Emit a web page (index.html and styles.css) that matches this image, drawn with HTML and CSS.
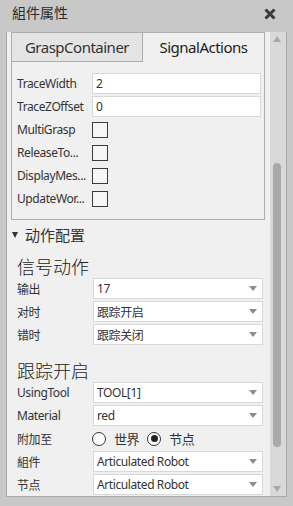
FILE: index.html
```html
<!DOCTYPE html>
<html lang="zh">

<head>
    <meta charset="UTF-8">
    <title>組件属性</title>
    <link rel="stylesheet" href="styles.css">
</head>

<body>
    <div class="titlebar">
        <span class="title">組件属性</span>
        <svg class="close" width="12" height="12" viewBox="0 0 12 12">
            <path d="M1.5 1.5 L10.5 10.5 M10.5 1.5 L1.5 10.5" stroke="#3a3a3a" stroke-width="3" />
        </svg>
    </div>

    <div class="panel">
        <div class="content">
            <!--选项卡-->
            <div class="tabs">
                <div class="tab">GraspContainer</div>
                <div class="tab current">SignalActions</div>
            </div>
            <div class="tabbody">
                <div class="row">
                    <span class="label">TraceWidth</span>
                    <div class="input">2</div>
                </div>
                <div class="row">
                    <span class="label">TraceZOffset</span>
                    <div class="input">0</div>
                </div>
                <div class="row">
                    <span class="label">MultiGrasp</span>
                    <span class="check"></span>
                </div>
                <div class="row">
                    <span class="label">ReleaseTo...</span>
                    <span class="check"></span>
                </div>
                <div class="row">
                    <span class="label">DisplayMes...</span>
                    <span class="check"></span>
                </div>
                <div class="row">
                    <span class="label">UpdateWor...</span>
                    <span class="check"></span>
                </div>
            </div>

            <!--动作配置-->
            <div class="group"><span class="caret"></span>动作配置</div>

            <div class="heading">信号动作</div>
            <div class="rows">
                <div class="row">
                    <span class="label">输出</span>
                    <div class="select"><span>17</span><i></i></div>
                </div>
                <div class="row">
                    <span class="label">对时</span>
                    <div class="select"><span>跟踪开启</span><i></i></div>
                </div>
                <div class="row">
                    <span class="label">错时</span>
                    <div class="select"><span>跟踪关闭</span><i></i></div>
                </div>
            </div>

            <div class="heading second">跟踪开启</div>
            <div class="rows">
                <div class="row">
                    <span class="label">UsingTool</span>
                    <div class="select"><span>TOOL[1]</span><i></i></div>
                </div>
                <div class="row">
                    <span class="label">Material</span>
                    <div class="select"><span>red</span><i></i></div>
                </div>
                <div class="row">
                    <span class="label">附加至</span>
                    <div class="radios">
                        <span class="radio"></span><span class="rtext">世界</span>
                        <span class="radio on"></span><span class="rtext">节点</span>
                    </div>
                </div>
                <div class="row">
                    <span class="label">組件</span>
                    <div class="select"><span>Articulated Robot</span><i></i></div>
                </div>
                <div class="row">
                    <span class="label">节点</span>
                    <div class="select"><span>Articulated Robot</span><i></i></div>
                </div>
            </div>
        </div>

        <!--滚动条-->
        <div class="scrollbar">
            <div class="arrow up"></div>
            <div class="track">
                <div class="thumb"></div>
            </div>
            <div class="arrow down"></div>
        </div>
    </div>
</body>

</html>
```

FILE: styles.css
```css
* {
    margin: 0;
    padding: 0;
    box-sizing: border-box;
}

body {
    width: 293px;
    height: 506px;
    overflow: hidden;
    background: #c8c8c8;
    font-family: "Noto Sans", "Noto Sans CJK SC", sans-serif;
    color: #333;
}

.titlebar {
    height: 32px;
    display: flex;
    align-items: center;
    justify-content: space-between;
    padding: 0 17px 0 12px;
}

.title {
    font-size: 14px;
    color: #2b2b2b;
    line-height: 20px;
    margin-top: -6px;
}

.close {
    margin-top: -5px;
}

.panel {
    margin-left: 6px;
    width: 281px;
    height: 465px;
    background: #f0f0f0;
    border: 1px solid #a8a8a8;
    border-top: none;
    display: flex;
}

.content {
    width: 258px;
    padding-left: 4px;
    overflow: hidden;
}

/* 选项卡 */
.tabs {
    display: flex;
    height: 30px;
}

.tab {
    width: 132px;
    height: 30px;
    border: 1px solid #adadad;
    background: #e4e4e4;
    font-size: 15px;
    letter-spacing: -0.5px;
    line-height: 28px;
    text-align: center;
    color: #333;
}

.tab.current {
    width: 122px;
    border-left: none;
    border-bottom: none;
    background: #f0f0f0;
    color: #222;
}

.tabbody {
    height: 158px;
    border: 1px solid #adadad;
    border-top: none;
    padding: 11px 3px 0 5px;
    display: flex;
    flex-direction: column;
    gap: 2px;
}

.row {
    height: 21px;
    display: flex;
    align-items: center;
    font-size: 12px;
    letter-spacing: -0.4px;
}

.label {
    width: 75px;
    flex-shrink: 0;
    white-space: nowrap;
}

.input {
    flex: 1;
    height: 21px;
    background: #fff;
    border: 1px solid #d8d8d8;
    padding-left: 3px;
    line-height: 19px;
}

.check {
    width: 16px;
    height: 16px;
    border: 1px solid #3c3c3c;
    background: #f6f6f6;
}

/* 分组标题 */
.group {
    height: 30px;
    line-height: 30px;
    font-size: 15px;
    padding-left: 1px;
    color: #333;
    display: flex;
    align-items: center;
}

.caret {
    width: 0;
    height: 0;
    border-left: 3px solid transparent;
    border-right: 3px solid transparent;
    border-top: 6px solid #333;
    margin-right: 7px;
}

.heading {
    font-size: 18px;
    font-weight: 300;
    line-height: 22px;
    padding: 6px 0 0 6px;
    height: 28px;
    color: #222;
}

.heading.second {
    padding-top: 15px;
    height: 37px;
}

.rows {
    padding: 0 2px 0 6px;
    display: flex;
    flex-direction: column;
    gap: 2px;
}

.rows .label {
    width: 76px;
}

.select {
    flex: 1;
    height: 21px;
    background: #fff;
    border: 1px solid #d8d8d8;
    padding-left: 3px;
    display: flex;
    align-items: center;
}

.select span {
    flex: 1;
}

.select i {
    width: 0;
    height: 0;
    border-left: 4px solid transparent;
    border-right: 4px solid transparent;
    border-top: 5px solid #8c8c8c;
    margin-right: 5px;
}

.radios {
    display: flex;
    align-items: center;
    font-size: 13px;
}

.radio {
    width: 14px;
    height: 14px;
    border: 1px solid #333;
    border-radius: 50%;
    background: #fff;
    margin-left: -1px;
    display: flex;
    align-items: center;
    justify-content: center;
}

.radio.on::after {
    content: "";
    width: 7px;
    height: 7px;
    border-radius: 50%;
    background: #222;
}

.rtext {
    margin: 0 9px 0 8px;
}

/* 滚动条 */
.scrollbar {
    width: 16px;
    margin-left: 5px;
    background: #d9d9d9;
    display: flex;
    flex-direction: column;
}

.arrow {
    height: 20px;
    display: flex;
    justify-content: center;
    align-items: center;
}

.arrow::after {
    content: "";
    width: 0;
    height: 0;
    border-left: 4px solid transparent;
    border-right: 4px solid transparent;
}

.arrow.up::after {
    border-bottom: 6px solid #a8a8a8;
    margin-left: -2px;
    margin-top: -6px;
}

.arrow.down::after {
    border-top: 6px solid #a8a8a8;
    margin-left: -2px;
    margin-top: 5px;
}

.track {
    flex: 1;
}

.thumb {
    width: 8px;
    height: 284px;
    margin: 111px 0 0 3px;
    background: #a9a9a9;
    border-radius: 4px;
}
```
